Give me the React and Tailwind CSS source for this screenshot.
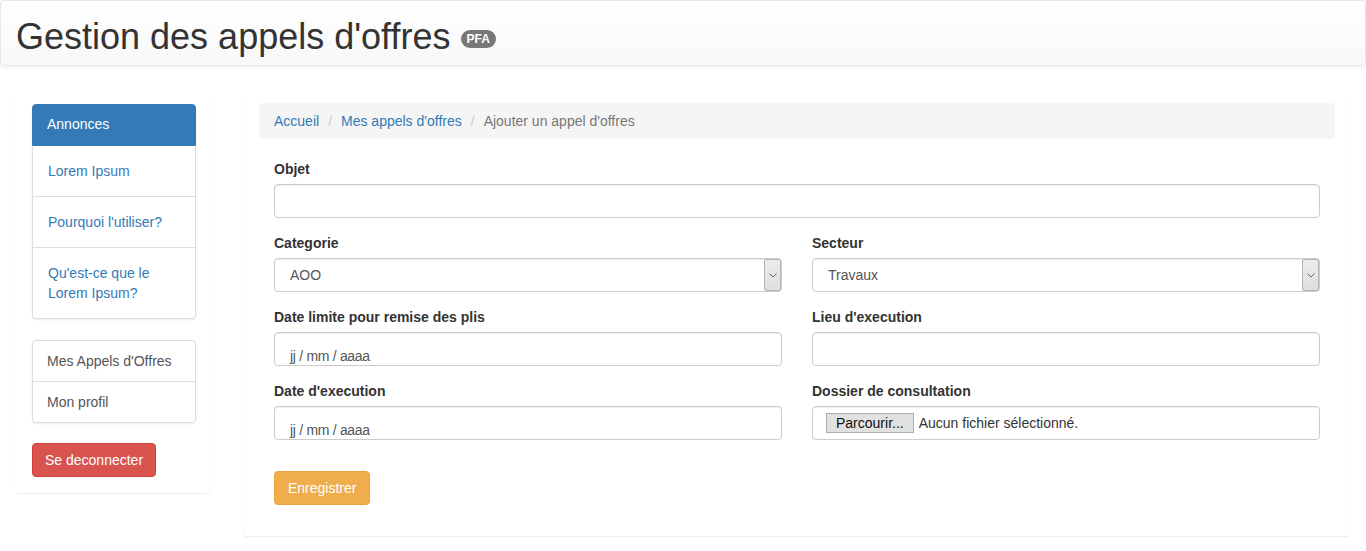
import React from 'react';

const font = { fontFamily: '"Liberation Sans", Arial, Helvetica, sans-serif' };

function Label({ children }) {
    return <label className="block h-[20px] mb-[5px] text-[14px] leading-[20px] font-bold text-[#333]">{children}</label>;
}

function TextBox() {
    return <input type="text" className="block w-full h-[34px] border border-[#ccc] rounded-[4px] bg-white px-[12px] text-[14px] text-[#555] shadow-[inset_0_1px_1px_rgba(0,0,0,0.075)] outline-none" />;
}

function SelectBox({ value }) {
    return (
        <div className="flex h-[34px] w-full border border-[#ccc] rounded-[4px] bg-white shadow-[inset_0_1px_1px_rgba(0,0,0,0.075)]">
            <div className="flex-1 flex items-center pl-[15px] text-[14px] text-[#555]">{value}</div>
            <div className="w-[17px] h-full flex items-center justify-center bg-gradient-to-b from-[#ededed] to-[#dedede] border border-[#b5b5b5] rounded-[2px]">
                <svg width="8" height="5" viewBox="0 0 8 5" fill="none">
                    <path d="M0.5 0.5 L4 4 L7.5 0.5" stroke="#666" strokeWidth="1" />
                </svg>
            </div>
        </div>
    );
}

function DateBox() {
    return (
        <div className="h-[34px] w-full border border-[#ccc] rounded-[4px] bg-white pl-[15px] pt-[13px] overflow-hidden shadow-[inset_0_1px_1px_rgba(0,0,0,0.075)]">
            <span className="block text-[14px] leading-[20px] text-[#555] tracking-[-0.3px]">jj / mm / aaaa</span>
        </div>
    );
}

export default function App() {
    return (
        <div className="w-full min-h-[551px] bg-white text-[14px] leading-[20px] text-[#333]" style={font}>
            {/* en-tête */}
            <header className="h-[66px] w-full border border-[#e7e7e7] rounded-[4px] bg-gradient-to-b from-white to-[#f8f8f8] shadow-[0_1px_5px_rgba(0,0,0,0.075)] pl-[15px] pt-[16px] mb-[21px]">
                <h1 className="text-[36px] leading-[40px] font-normal text-[#333]">
                    Gestion des appels d'offres{' '}
                    <span className="inline-block align-middle bg-[#777] text-white text-[12px] leading-[12px] font-bold px-[6px] py-[3px] rounded-[10px]">PFA</span>
                </h1>
            </header>

            <div className="flex">
                {/* barre latérale */}
                <aside className="w-[228px] shrink-0 px-[16px]">
                    <div className="border border-transparent rounded-[4px] bg-white shadow-[0_1px_1px_rgba(0,0,0,0.08)] p-[15px] pt-[16px]">
                        <div className="rounded-[4px] shadow-[0_1px_2px_rgba(0,0,0,0.075)] mb-[21px]">
                            <div className="px-[14px] pt-[9px] pb-[11px] bg-[#337ab7] border border-[#337ab7] text-white rounded-t-[4px]">Annonces</div>
                            <a className="block px-[15px] py-[15px] border-x border-b border-[#ddd] text-[#337ab7]">Lorem Ipsum</a>
                            <a className="block px-[15px] py-[15px] border-x border-b border-[#ddd] text-[#337ab7]">Pourquoi l'utiliser?</a>
                            <a className="block px-[15px] py-[15px] border-x border-b border-[#ddd] text-[#337ab7] rounded-b-[4px]">Qu'est-ce que le Lorem Ipsum?</a>
                        </div>
                        <div className="rounded-[4px] border border-[#ddd] shadow-[0_1px_2px_rgba(0,0,0,0.075)] mb-[20px]">
                            <a className="block px-[14px] py-[10px] border-b border-[#ddd] text-[#555]">Mes Appels d'Offres</a>
                            <a className="block px-[14px] py-[10px] text-[#555]">Mon profil</a>
                        </div>
                        <button className="h-[34px] px-[12px] bg-[#d9534f] border border-[#d43f3a] rounded-[4px] text-white text-[14px]">Se deconnecter</button>
                    </div>
                </aside>

                {/* contenu principal */}
                <main className="flex-1 px-[15px]">
                    <div className="border border-transparent rounded-[4px] bg-white shadow-[0_1px_1px_rgba(0,0,0,0.08)] pt-[15px] px-[15px] pb-[30px]">
                        <ol className="flex items-center h-[36px] px-[15px] bg-[#f5f5f5] rounded-[4px] mb-[20px]">
                            <li className="text-[#337ab7]">Accueil</li>
                            <li className="pl-[9px] pr-[9px] text-[#ccc]">/</li>
                            <li className="text-[#337ab7]">Mes appels d'offres</li>
                            <li className="pl-[9px] pr-[9px] text-[#ccc]">/</li>
                            <li className="text-[#777]">Ajouter un appel d'offres</li>
                        </ol>

                        <form className="px-[15px]">
                            <div className="mb-[15px]">
                                <Label>Objet</Label>
                                <TextBox />
                            </div>
                            <div className="grid grid-cols-2 gap-x-[30px]">
                                <div className="mb-[15px]">
                                    <Label>Categorie</Label>
                                    <SelectBox value="AOO" />
                                </div>
                                <div className="mb-[15px]">
                                    <Label>Secteur</Label>
                                    <SelectBox value="Travaux" />
                                </div>
                                <div className="mb-[15px]">
                                    <Label>Date limite pour remise des plis</Label>
                                    <DateBox />
                                </div>
                                <div className="mb-[15px]">
                                    <Label>Lieu d'execution</Label>
                                    <TextBox />
                                </div>
                                <div className="mb-[15px]">
                                    <Label>Date d'execution</Label>
                                    <DateBox />
                                </div>
                                <div className="mb-[15px]">
                                    <Label>Dossier de consultation</Label>
                                    <div className="flex items-center h-[34px] w-full border border-[#ccc] rounded-[4px] bg-white pl-[13px] shadow-[inset_0_1px_1px_rgba(0,0,0,0.075)]">
                                        <span className="h-[20px] px-[9px] flex items-center bg-[#e1e1e1] border border-[#adadad] text-[14px] text-[#111]">Parcourir...</span>
                                        <span className="ml-[5px] text-[14px] text-[#333]">Aucun fichier sélectionné.</span>
                                    </div>
                                </div>
                            </div>
                            <button type="button" className="mt-[16px] h-[34px] px-[13px] bg-[#f0ad4e] border border-[#eea236] rounded-[4px] text-white text-[14px]">Enregistrer</button>
                        </form>
                    </div>
                </main>
            </div>
        </div>
    );
}
